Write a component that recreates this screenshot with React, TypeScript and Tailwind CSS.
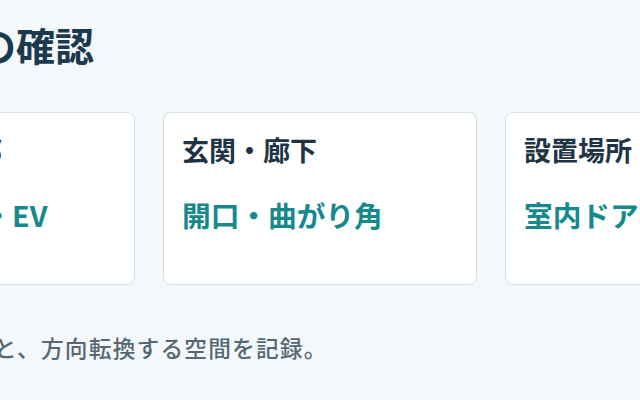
import React from 'react';

const points = [
  { label: '建物・共用部', value: '階段・通路・EV' },
  { label: '玄関・廊下', value: '開口・曲がり角' },
  { label: '設置場所', value: '室内ドア・階段' },
];

export default function App() {
  return (
    <div className="w-[640px] h-[400px] overflow-hidden bg-[#f4f8fa] font-['Noto_Sans_CJK_JP','Noto_Sans',sans-serif]">
      <div className="ml-[-179px] w-[998px] pt-[20px]">
        <h2 className="text-[39px] leading-[49px] font-bold text-[#1c3a4e]">搬入経路の確認</h2>

        <div className="mt-[43px] grid grid-cols-3 gap-[28px]">
          {points.map(p => (
            <div key={p.label} className="bg-white border border-[#d4dfe6] rounded-[8px] pl-[18px] pt-[18px] pb-[49px]">
              <p className="text-[27px] leading-[38px] font-semibold text-[#1e3444] whitespace-nowrap">{p.label}</p>
              <p className="mt-[26px] text-[28.7px] leading-[40px] font-bold text-[#16898d] whitespace-nowrap">{p.value}</p>
            </div>
          ))}
        </div>

        <p className="mt-[46px] ml-[-18px] text-[22.7px] leading-[33px] tracking-[1.2px] font-medium text-[#566873] whitespace-nowrap">
          通路幅・段差などと、方向転換する空間を記録。
        </p>
      </div>
    </div>
  );
}
